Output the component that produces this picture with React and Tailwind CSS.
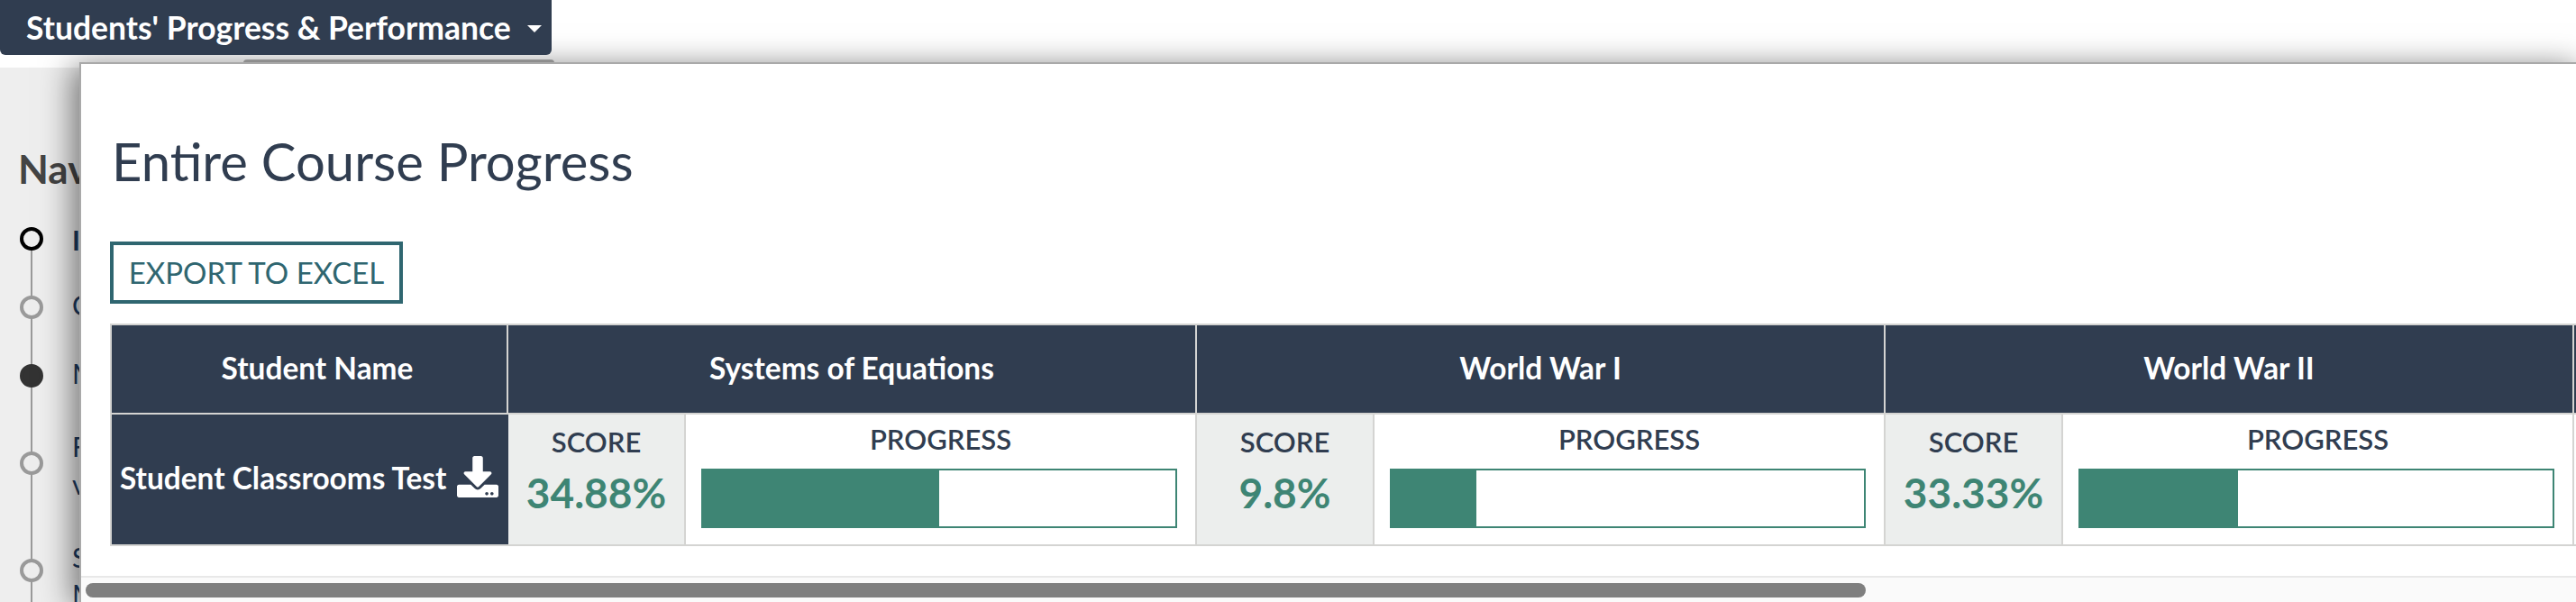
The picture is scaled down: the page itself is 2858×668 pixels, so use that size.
import React from "react";
import { FaDownload } from "react-icons/fa";

const groups = [
    { name: "Systems of Equations", score: "34.88%", bar: "w-[50%]" },
    { name: "World War I", score: "9.8%", bar: "w-[18%]" },
    { name: "World War II", score: "33.33%", bar: "w-[33.33%]" },
];

const GroupHead = ({ name }) => (
    <div className="w-[764px] shrink-0 h-[97px] pb-[3px] flex items-center justify-center bg-[#303d50] border-r-2 border-[#d4d4d2] text-white font-bold text-[33.4px]">
        {name}
    </div>
);

const GroupCell = ({ score, bar }) => (
    <div className="w-[764px] shrink-0 h-[144px] flex border-r-2 border-[#d4d4d2]">
        <div className="w-[197px] shrink-0 bg-[#eceeed] border-r-2 border-[#d4d4d2] flex flex-col items-center pt-[10px]">
            <div className="text-[31px] leading-[40px] font-semibold text-[#303d50]">SCORE</div>
            <div className="text-[46px] leading-[56px] mt-[9px] font-bold text-[#3e8574]">{score}</div>
        </div>
        <div className="flex-1 flex flex-col items-center pt-[7px]">
            <div className="text-[31px] leading-[40px] font-semibold text-[#303d50]">PROGRESS</div>
            <div className="self-start ml-[17px] w-[528px] h-[66px] mt-[13px] border-2 border-[#3e8574] bg-white">
                <div className={`h-full bg-[#3e8574] ${bar}`} />
            </div>
        </div>
    </div>
);

const steps = [
    { y: "mt-[0px]", ring: "border-black bg-[#eeeeee]" },
    { y: "mt-[50px]", ring: "border-[#9a9a9a] bg-[#eeeeee]" },
    { y: "mt-[50px]", ring: "border-[#333333] bg-[#333333]" },
    { y: "mt-[71px]", ring: "border-[#9a9a9a] bg-[#eeeeee]" },
    { y: "mt-[93px]", ring: "border-[#9a9a9a] bg-[#eeeeee]" },
];

export default function App() {
    return (
        <div className="relative w-[2858px] h-[668px] overflow-hidden bg-white font-['Lato',sans-serif]">
            <div className="h-[75px]">
                <button className="relative z-10 h-[61px] w-[612px] bg-[#303d50] rounded-b-[6px] flex items-center pl-[29px] text-white font-bold text-[35.5px]">
                    Students' Progress &amp; Performance
                    <span className="ml-[18px] mt-[2px] border-t-[8px] border-x-[8px] border-t-white border-x-transparent" />
                </button>
            </div>

            <div className="h-[593px] bg-[#eeeeee] pl-[20px] pt-[88px]">
                <h2 className="text-[44px] leading-[48px] font-bold text-[#444444]">Nav</h2>
                <div className="relative mt-[41px] ml-[2px] w-[60px]">
                    <div className="absolute left-[12px] top-[0px] w-[2px] h-[420px] bg-[#9a9a9a]" />
                    {steps.map((s, i) => (
                        <div key={i} className={`relative w-[26px] h-[26px] rounded-full border-4 ${s.y} ${s.ring}`} />
                    ))}
                    <div className="absolute left-[58px] top-[-6px] text-[30px] leading-[40px] font-bold text-[#1d3a60]">I</div>
                    <div className="absolute left-[58px] top-[66px] text-[30px] leading-[40px] text-[#1d3a60]">C</div>
                    <div className="absolute left-[58px] top-[142px] text-[30px] leading-[40px] text-[#1d3a60]">M</div>
                    <div className="absolute left-[58px] top-[223px] text-[30px] leading-[40px] text-[#1d3a60]">F</div>
                    <div className="absolute left-[58px] top-[265px] text-[30px] leading-[40px] text-[#1d3a60]">v</div>
                    <div className="absolute left-[58px] top-[346px] text-[30px] leading-[40px] text-[#1d3a60]">S</div>
                    <div className="absolute left-[58px] top-[387px] text-[30px] leading-[40px] text-[#1d3a60]">M</div>
                </div>
            </div>

            <div className="absolute left-[270px] top-[66px] w-[345px] h-[4px] rounded-t-[4px] bg-[#b0b0b0]" />

            <div className="absolute left-[88px] top-[69px] w-[2780px] h-[600px] bg-white border-t-2 border-l-2 border-[#a9a9a9] shadow-[-8px_4px_32px_rgba(0,0,0,0.5)] flex flex-col">
                <div className="h-[568px] pl-[32px] overflow-hidden">
                    <h1 className="mt-[72px] ml-[2px] text-[58px] leading-[72px] text-[#303d50]">Entire Course Progress</h1>
                    <button className="mt-[53px] w-[325px] h-[69px] border-4 border-[#2f6670] text-[33px] text-[#2f6670] flex items-center justify-center">
                        EXPORT TO EXCEL
                    </button>
                    <div className="mt-[22px] w-[3600px] border-y-2 border-l-2 border-[#d4d4d2]">
                        <div className="flex border-b-2 border-[#d4d4d2]">
                            <div className="w-[440px] shrink-0 h-[97px] pb-[3px] pl-[18px] flex items-center justify-center bg-[#303d50] border-r-2 border-[#d4d4d2] text-white font-bold text-[33.4px]">
                                Student Name
                            </div>
                            {groups.map((g) => (
                                <GroupHead key={g.name} name={g.name} />
                            ))}
                            <div className="flex-1 bg-[#303d50]" />
                        </div>
                        <div className="flex">
                            <div className="w-[440px] shrink-0 h-[144px] flex items-center bg-[#303d50] pl-[9px] whitespace-nowrap text-white font-bold text-[33.4px]">
                                <span className="pb-[3px]">Student Classrooms Test</span>
                                <FaDownload className="ml-[12px] mb-[6px] w-[46px] h-[46px] shrink-0" />
                            </div>
                            {groups.map((g) => (
                                <GroupCell key={g.name} score={g.score} bar={g.bar} />
                            ))}
                        </div>
                    </div>
                </div>
                <div className="h-[29px] bg-[#fafafa] border-t-2 border-[#e8e8e8] pl-[5px] pt-[6px]">
                    <div className="w-[1975px] h-[16px] rounded-[8px] bg-[#7f7f7f]" />
                </div>
            </div>
        </div>
    );
}
